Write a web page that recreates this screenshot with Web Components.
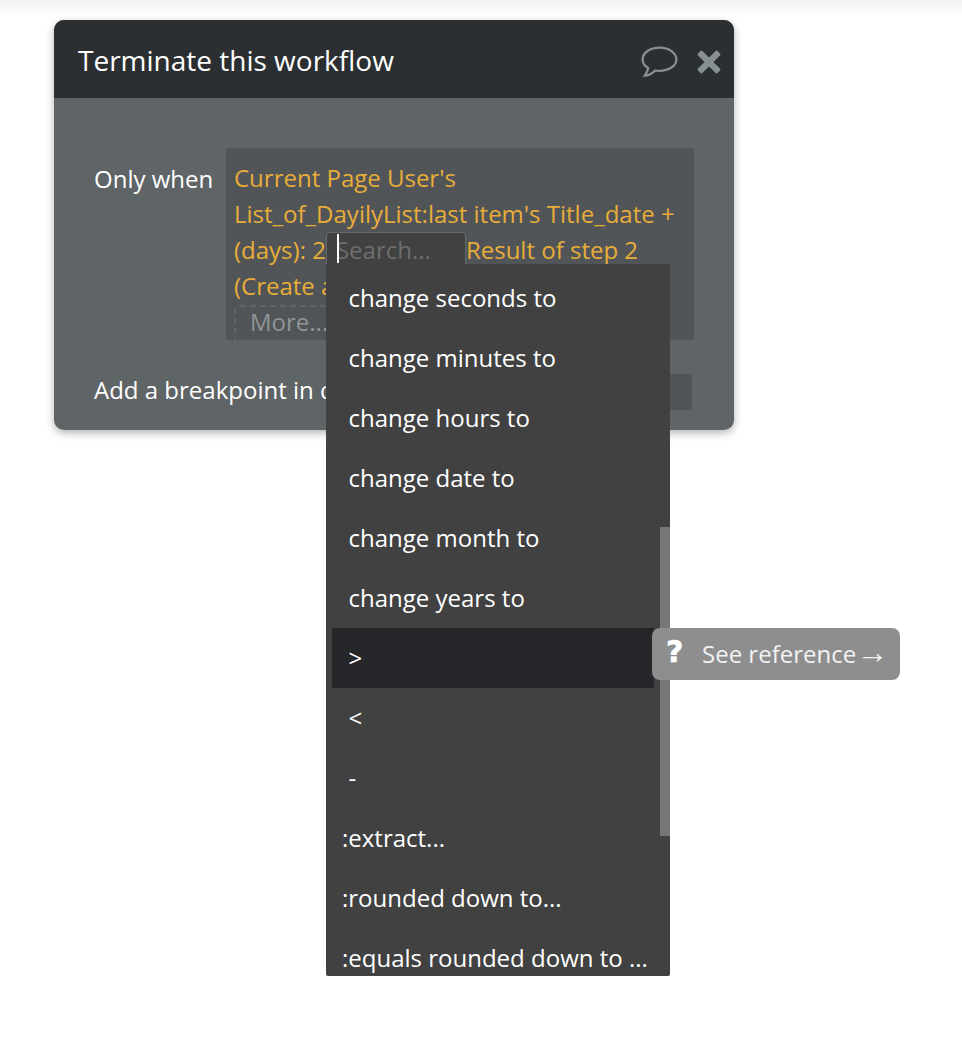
<!DOCTYPE html>
<html>
<head>
<meta charset="utf-8">
<title>Terminate this workflow</title>
<style>
  html, body { margin: 0; height: 100%; }
  body {
    background: linear-gradient(#f2f2f2, #fff 16px);
    font-family: "Open Sans", "Noto Sans", sans-serif;
    overflow: hidden;
  }
</style>
</head>
<body>
<wf-page>
  <wf-card title="Terminate this workflow">
    <wf-row label="Only when">
      <wf-expression>Current Page User's<br>List_of_DayilyList:last item's Title_date +<br>(days): 2<wf-search></wf-search>Result of step 2<br>(Create a</wf-expression>
    </wf-row>
    <wf-row label="Add a breakpoint in d" slot="footer">
      <wf-dummy-input></wf-dummy-input>
    </wf-row>
  </wf-card>

  <wf-menu>
    <wf-item>change seconds to</wf-item>
    <wf-item>change minutes to</wf-item>
    <wf-item>change hours to</wf-item>
    <wf-item>change date to</wf-item>
    <wf-item>change month to</wf-item>
    <wf-item>change years to</wf-item>
    <wf-item active>&gt;</wf-item>
    <wf-item>&lt;</wf-item>
    <wf-item>-</wf-item>
    <wf-item flush>:extract...</wf-item>
    <wf-item flush>:rounded down to...</wf-item>
    <wf-item flush>:equals rounded down to ...</wf-item>
  </wf-menu>

  <wf-tooltip>See reference<span style="font: 32px/1 'Liberation Sans', sans-serif; margin-top: -3px">→</span></wf-tooltip>
</wf-page>

<script>
// small helper so each element is just a template string
function define(name, html, Base = HTMLElement) {
  customElements.define(name, class extends Base {
    constructor() {
      super();
      this.attachShadow({ mode: "open" });
      this.shadowRoot.innerHTML = typeof html === "function" ? html(this) : html;
    }
  });
}

define("wf-page", `
  <style>
    :host { display: block; position: relative; padding: 20px 0 0 54px; }
    ::slotted(wf-menu) { position: absolute; left: 326px; top: 264px; }
    ::slotted(wf-tooltip) { position: absolute; left: 652px; top: 628px; }
  </style>
  <slot></slot>
`);

define("wf-card", el => `
  <style>
    :host {
      display: block;
      width: 680px;
      height: 410px;
      border-radius: 10px;
      background: #5f6467;
      box-shadow: 0 3px 8px rgba(0, 0, 0, .3);
      color: #fff;
    }
    header {
      height: 78px;
      box-sizing: border-box;
      padding: 0 12px 0 24px;
      display: flex;
      align-items: center;
      background: #2b2f32;
      border-radius: 10px 10px 0 0;
      font-size: 28px;
    }
    h1 { flex: 1; margin: 0; font: inherit; position: relative; top: 1px; }
    .icons { display: flex; align-items: center; gap: 18px; position: relative; top: 3px; }
    svg { display: block; }
    main { padding: 50px 40px 0 40px; }
    .footer { margin-top: 34px; }
  </style>
  <header>
    <h1>${el.getAttribute("title")}</h1>
    <div class="icons">
      <svg width="37" height="32" viewBox="0 0 37 32" fill="none" stroke="#879193" stroke-width="2.2">
        <path d="M18.5 1.6C9 1.6 1.6 6.8 1.6 13.4c0 3.6 2.2 6.6 5.6 8.6-.4 2.8-1.7 5.4-3.4 7.6 4.4-.4 8-2.4 10.4-5.1 1.4.2 2.8.3 4.3.3 9.5 0 16.9-5 16.9-11.4S28 1.6 18.5 1.6z"/>
      </svg>
      <svg width="26" height="26" viewBox="0 0 26 26">
        <path d="M6.4 2 13 8.6 19.6 2q1-1 2 0l2.4 2.4q1 1 0 2L17.4 13l6.6 6.6q1 1 0 2L21.6 24q-1 1-2 0L13 17.4 6.4 24q-1 1-2 0L2 21.6q-1-1 0-2L8.6 13 2 6.4q-1-1 0-2L4.4 2q1-1 2 0z" fill="#879193"/>
      </svg>
    </div>
  </header>
  <main>
    <slot></slot>
    <div class="footer"><slot name="footer"></slot></div>
  </main>
`);

define("wf-row", el => `
  <style>
    :host { display: flex; align-items: flex-start; font-size: 24px; }
    .label { flex: none; white-space: nowrap; line-height: 36px; }
    :host(:not([slot=footer])) .label { width: 132px; padding-top: 13px; }
    :host([slot=footer]) { height: 36px; justify-content: space-between; padding-right: 2px; }
    :host([slot=footer]) .label { margin-top: -2px; }
  </style>
  <div class="label">${el.getAttribute("label")}</div>
  <slot></slot>
`);

define("wf-expression", `
  <style>
    :host {
      display: block;
      position: relative;
      width: 468px;
      height: 192px;
      box-sizing: border-box;
      padding: 12px 8px 0;
      background: #515558;
      border-radius: 2px;
      color: #e8ad39;
      line-height: 36px;
      white-space: nowrap;
    }
    .more {
      position: absolute;
      left: 8px;
      top: 157px;
      width: 120px;
      height: 35px;
      box-sizing: border-box;
      padding-left: 14px;
      border: 2px dashed #5f6467;
      border-bottom: 0;
      border-radius: 6px 6px 0 0;
      color: #909496;
      line-height: 30px;
    }
  </style>
  <slot></slot>
  <div class="more">More...</div>
`);

define("wf-search", `
  <style>
    :host {
      display: inline-block;
      position: relative;
      width: 138px;
      height: 31px;
      margin: 0 1px 0 1px;
      box-sizing: border-box;
      background: #414141;
      border-radius: 4px 4px 0 0;
      box-shadow: 0 0 0 1px #63686b;
      color: #6d6d6d;
      line-height: 34px;
      padding-left: 9px;
    }
    i { position: absolute; left: 10px; top: 1px; width: 2px; height: 29px; background: #fff; }
  </style>
  <i></i>Search...
`);

define("wf-dummy-input", `
  <style>
    :host { display: block; width: 22px; height: 36px; background: #515558; border-radius: 2px; }
  </style>
`);

define("wf-menu", `
  <style>
    :host {
      display: block;
      width: 344px;
      height: 712px;
      box-sizing: border-box;
      padding: 4px 0 0 6px;
      overflow: hidden;
      background: #414141;
      border-radius: 0 0 2px 2px;
      color: #fff;
      font-size: 24px;
    }
    .bar { position: absolute; right: 0; top: 263px; width: 10px; height: 309px; background: #777; }
  </style>
  <slot></slot>
  <div class="bar"></div>
`);

define("wf-item", `
  <style>
    :host {
      display: block;
      width: 322px;
      height: 60px;
      box-sizing: border-box;
      padding-left: 16.5px;
      line-height: 60px;
      white-space: nowrap;
    }
    :host([active]) { background: #26272a; }
    :host([flush]) { padding-left: 10px; }
  </style>
  <slot></slot>
`);

define("wf-tooltip", `
  <style>
    :host {
      display: flex;
      align-items: center;
      width: 248px;
      height: 52px;
      box-sizing: border-box;
      padding: 0 0 2px 14px;
      background: #8e8e8e;
      border-radius: 8px;
      color: #f2f2f2;
      font-size: 24px;
      white-space: pre;
    }
    b {
      width: 36px;
      font: 900 30px "DejaVu Sans", sans-serif;
      -webkit-text-stroke: .6px #fff;
      color: #fff;
      position: relative;
      top: -2px;
    }
  </style>
  <b>?</b><slot></slot>
`);
</script>
</body>
</html>
